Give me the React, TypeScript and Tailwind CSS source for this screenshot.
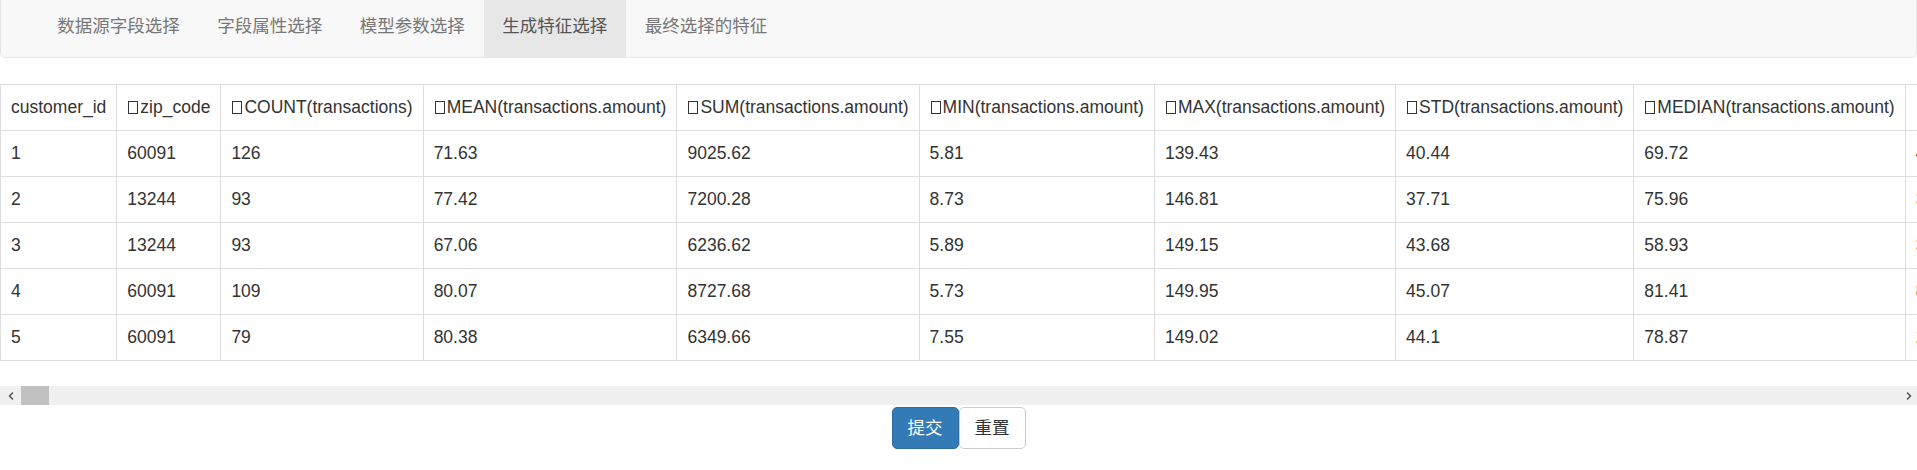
import { ChevronLeft, ChevronRight } from "lucide-react";

const tabs = ["数据源字段选择", "字段属性选择", "模型参数选择", "生成特征选择", "最终选择的特征"];

const headers = [
  "zip_code",
  "COUNT(transactions)",
  "MEAN(transactions.amount)",
  "SUM(transactions.amount)",
  "MIN(transactions.amount)",
  "MAX(transactions.amount)",
  "STD(transactions.amount)",
  "MEDIAN(transactions.amount)",
  "SKEW(transactions.amount)",
];

const rows = [
  ["1", "60091", "126", "71.63", "9025.62", "5.81", "139.43", "40.44", "69.72", "4.05"],
  ["2", "13244", "93", "77.42", "7200.28", "8.73", "146.81", "37.71", "75.96", "3.22"],
  ["3", "13244", "93", "67.06", "6236.62", "5.89", "149.15", "43.68", "58.93", "3.17"],
  ["4", "60091", "109", "80.07", "8727.68", "5.73", "149.95", "45.07", "81.41", "8.36"],
  ["5", "60091", "79", "80.38", "6349.66", "7.55", "149.02", "44.1", "78.87", "2.91"],
];

// missing-glyph box in front of the generated feature names
const Box = () => (
  <span className="inline-block w-[10px] h-[13px] border border-[#333] ml-[1px] mr-[2px] align-[-1px]" />
);

const App = () => {
  return (
    <div
      className="w-full h-[470px] bg-white text-[#333] text-[17.5px] overflow-hidden"
      style={{ fontFamily: '"Liberation Sans", "Noto Sans CJK SC", Arial, sans-serif' }}
    >
      {/* Navbar */}
      <div className="h-[58px] bg-[#f8f8f8] border-x border-b border-[#e7e7e7] rounded-b-[5px] pl-[37.5px]">
        <ul className="flex h-[57px]">
          {tabs.map((t, i) => (
            <li
              key={t}
              className={
                i === 3
                  ? "px-[18.75px] pt-[14px] leading-[25px] bg-[#e7e7e7] text-[#555]"
                  : "px-[18.75px] pt-[14px] leading-[25px] text-[#777]"
              }
            >
              {t}
            </li>
          ))}
        </ul>
      </div>

      {/* Table */}
      <div className="mt-[26px] w-full overflow-hidden">
        <table className="border-collapse border border-[#ddd]">
          <thead>
            <tr>
              <th className="font-normal text-left whitespace-nowrap border border-[#ddd] p-[10px] leading-[25px]">
                customer_id
              </th>
              {headers.map((h) => (
                <th
                  key={h}
                  className="font-normal text-left whitespace-nowrap border border-[#ddd] p-[10px] leading-[25px]"
                >
                  <Box />
                  {h}
                </th>
              ))}
            </tr>
          </thead>
          <tbody>
            {rows.map((r) => (
              <tr key={r[0]}>
                {r.map((c, j) => (
                  <td
                    key={j}
                    className="whitespace-nowrap border border-[#ddd] p-[10px] leading-[25px]"
                  >
                    {c}
                  </td>
                ))}
              </tr>
            ))}
          </tbody>
        </table>
      </div>

      {/* Scrollbar */}
      <div className="mt-[25px] h-[19px] bg-[#f0f0f0] flex items-center">
        <div className="w-[21px] flex justify-center">
          <ChevronLeft size={12} strokeWidth={3} className="text-[#505050]" />
        </div>
        <div className="w-[28px] h-[19px] bg-[#c1c1c1]" />
        <div className="flex-1" />
        <div className="w-[17px] flex justify-center">
          <ChevronRight size={12} strokeWidth={3} className="text-[#505050]" />
        </div>
      </div>

      {/* Buttons */}
      <div className="mt-[2px] flex justify-center">
        <button className="h-[42px] px-[15px] leading-[25px] bg-[#337ab7] border border-[#2e6da4] text-white rounded-[5px]">
          提交
        </button>
        <button className="h-[42px] px-[15px] leading-[25px] bg-white border border-[#ccc] text-[#333] rounded-[5px]">
          重置
        </button>
      </div>
    </div>
  );
};

export default App;
